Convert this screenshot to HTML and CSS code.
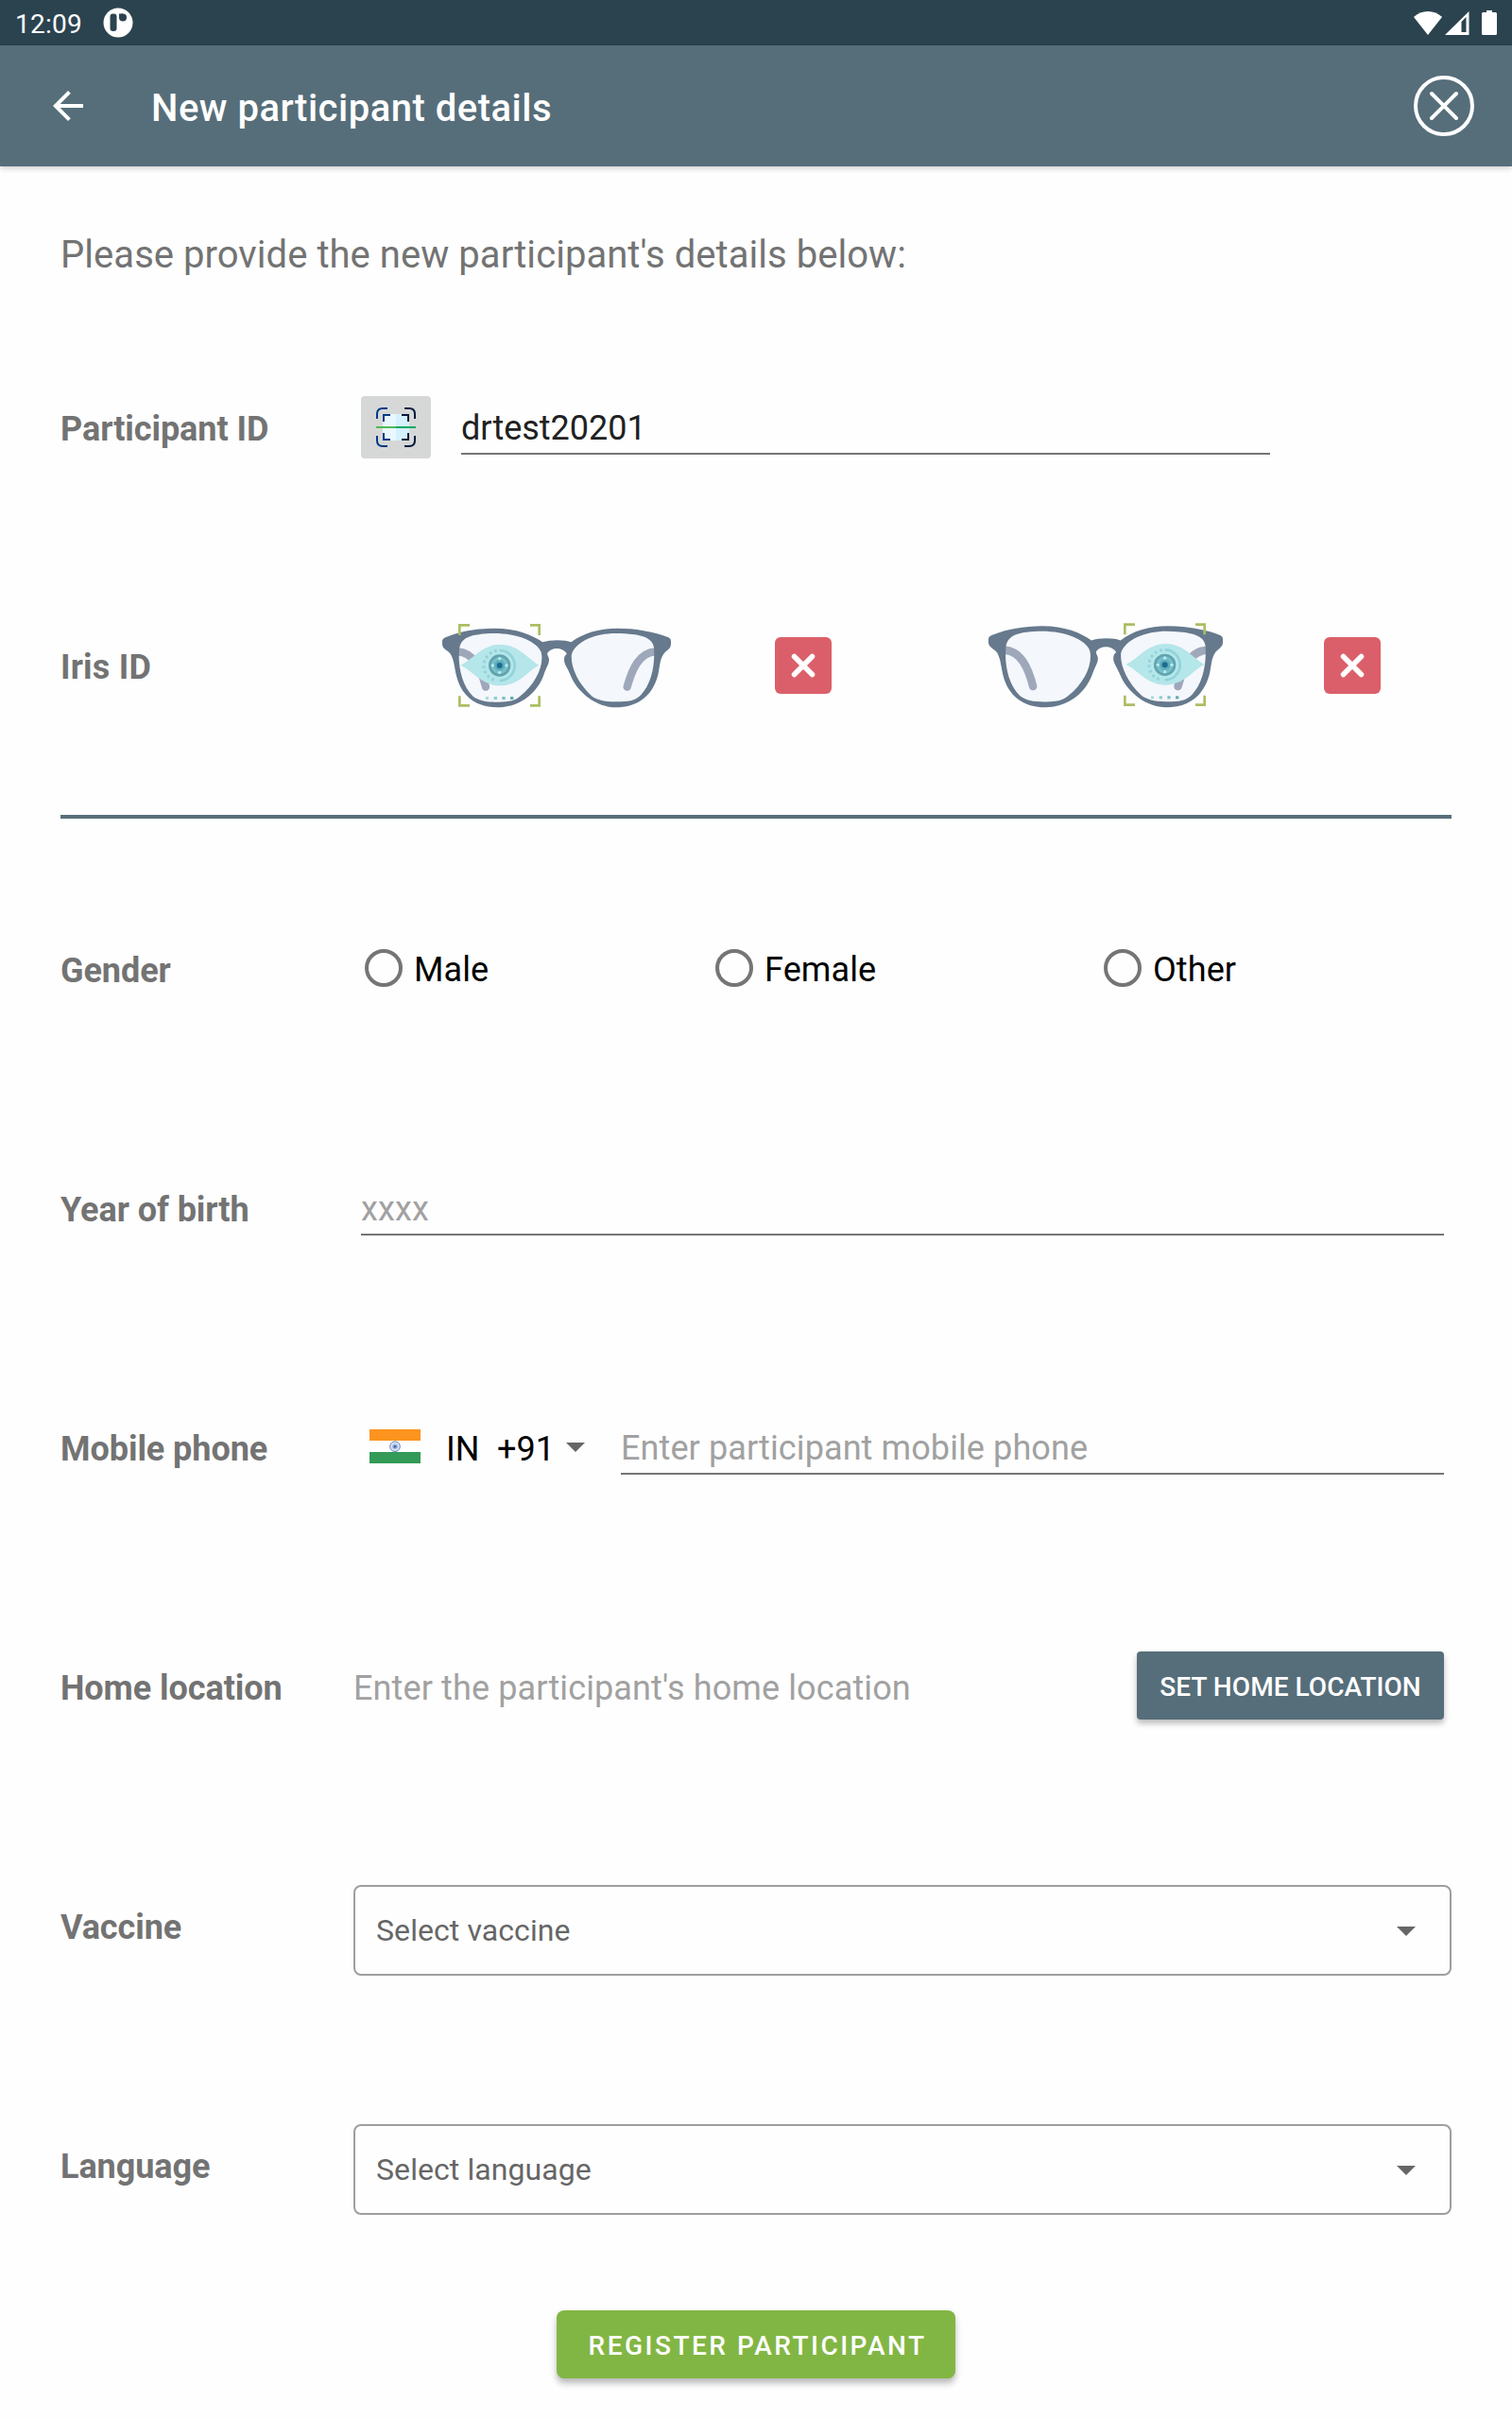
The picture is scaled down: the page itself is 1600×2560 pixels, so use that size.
FILE: index.html
```html
<!DOCTYPE html>
<html lang="en">
<head>
<meta charset="utf-8">
<title>New participant details</title>
<link rel="stylesheet" href="styles.css">
</head>
<body>
<svg class="defs" width="0" height="0" aria-hidden="true">
  <defs>
    <g id="frame">
      <path fill="#f4f7fb" d="M108 140C112 100 150 91 220 90C290 90 355 115 368 150C378 190 352 250 300 290C285 303 270 307 230 308C190 308 170 303 152 290C115 255 103 190 108 140ZM465 155C480 115 540 90 605 90C690 91 722 105 726 135C730 190 718 250 685 285C665 305 645 307 605 307C565 307 545 300 530 290C480 245 460 190 465 155Z"/>
      <path fill="none" stroke="#9fa8ba" stroke-width="25" stroke-linecap="round" d="M102 148C155 150 178 205 192 260M732 148C679 150 656 205 641 260"/>
      <path fill="#66798d" fill-rule="evenodd" d="M54 114C54 108 60 104 68 101C110 84 165 74 220 74C290 74 340 95 373 118C395 110 445 110 463 118C500 90 550 74 610 74C665 74 725 84 768 101C776 104 780 108 780 114V124C780 140 764 145 757 155C743 175 745 200 738 225C720 292 670 325 605 325C545 325 485 280 462 225C450 195 437 185 442 165C444 158 452 155 448 152C435 133 400 133 388 152C385 157 392 165 393 172C393 190 385 195 375 225C350 290 290 325 230 325C165 325 115 292 99 225C92 195 92 175 80 155C73 145 54 140 54 124ZM108 140C103 190 115 255 152 290C170 303 190 308 230 308C270 307 285 303 300 290C352 250 378 190 368 150C355 115 290 90 220 90C150 91 112 100 108 140ZM465 155C460 190 480 245 530 290C545 300 565 307 605 307C645 307 665 305 685 285C718 250 730 190 726 135C722 105 690 91 605 90C540 90 480 115 465 155Z"/>
    </g>
    <g id="eye">
      <path fill="#b4e6ea" d="M112 191C150 174 180 125 238 125C296 125 325 170 361 191C325 210 296 256 238 256C180 256 150 208 112 191Z"/>
      <path fill="none" stroke="#93d3db" stroke-width="8" d="M236 144A48 48 0 0 1 236 240"/>
      <path fill="none" stroke="#93d3db" stroke-width="9" stroke-dasharray="8 9" d="M227 145A48 48 0 0 0 227 240"/>
      <circle cx="236" cy="192" r="35" fill="#62a4ae"/>
      <circle cx="236" cy="192" r="27" fill="#78bfc9"/>
      <circle cx="236" cy="192" r="17" fill="#5fadbb"/>
      <circle cx="236" cy="192" r="9" fill="#1d6b8f"/>
      <g fill="#b9ebf0"><circle cx="236" cy="170" r="5"/><circle cx="236" cy="214" r="5"/><circle cx="214" cy="192" r="5"/><circle cx="258" cy="192" r="5"/></g>
      <path fill="#a8dcda" d="M192 291h9v9h-9z"/><path fill="#8cccd0" d="M218 291h10v9h-10z"/><path fill="#7abfc6" d="M244 291h10v9h-10z"/><path fill="#5ea9b4" d="M270 291h10v9h-10z"/>
      <path fill="none" stroke="#abbe63" stroke-width="8" d="M109 96V64H141M333 64H362V96M109 289V319H141M333 319H362V289"/>
    </g>
  </defs>
</svg>

<div class="status-bar">
  <span class="clock">12:09</span>
  <svg class="app-badge" width="32" height="32" viewBox="0 0 32 32"><circle cx="16" cy="16" r="15.5" fill="#fff"/><rect x="7.500" y="6.500" width="7" height="18.500" rx="3" fill="#2b434f"/><circle cx="21" cy="10.500" r="4" fill="#2b434f"/><path fill="#2b434f" d="M17 6.500h4v4h-4z"/></svg>
  <div class="status-icons">
    <svg width="30" height="25" viewBox="0 0 30 25"><path fill="#fff" d="M0 6C8-2 22-2 30 6L15 25Z"/></svg>
    <svg width="26" height="25" viewBox="0 0 26 25"><path fill="#fff" fill-rule="evenodd" d="M0 25L25.500 0V25ZM17.500 11V22H22.500V6Z"/></svg>
    <svg class="battery" width="16" height="26" viewBox="0 0 16 26"><path fill="#fff" d="M5 0h6v2h3.500q1.500 0 1.500 1.500v21q0 1.500-1.500 1.500h-13q-1.500 0-1.500-1.500v-21q0-1.500 1.500-1.500H5z"/></svg>
  </div>
</div>

<header class="app-bar">
  <svg width="48" height="48" viewBox="0 0 24 24"><path fill="#fff" d="M20 11H7.830l5.590-5.590L12 4l-8 8 8 8 1.410-1.410L7.830 13H20z"/></svg>
  <h1>New participant details</h1>
  <svg class="close" width="64" height="64" viewBox="0 0 64 64" fill="none" stroke="#fff" stroke-width="4" stroke-linecap="round"><circle cx="32" cy="32" r="30"/><path d="M19 19L45 45M45 19L19 45"/></svg>
</header>

<main>
  <p class="intro">Please provide the new participant's details below:</p>

  <div class="row">
    <div class="label">Participant ID</div>
    <button class="scan" aria-label="Scan">
      <svg width="42" height="42" viewBox="0 0 42 42"><path fill="#e9f8ff" d="M7 7h14v28H7z"/><path fill="#d5f1fd" d="M21 7h14v28H21z"/><g fill="none" stroke-width="2"><path stroke="#023a84" d="M1 12V7q0-6 6-6h5M1 30v5q0 6 6 6h5"/><path stroke="#021a3e" d="M30 1h5q6 0 6 6v5M30 41h5q6 0 6-6v-5"/><path stroke="#023a84" d="M8 15V8h7M8 27v7h7"/><path stroke="#021a3e" d="M27 8h7v7M27 34h7v-7"/></g><path fill="#51ba55" d="M0 20h21v2H0z"/><path fill="#08ab66" d="M21 20h21v2H21z"/></svg>
    </button>
    <div class="field id-field">drtest20201</div>
  </div>

  <div class="row iris">
    <div class="label">Iris ID</div>
    <svg class="glasses" width="280" height="130" viewBox="0 0 840 390"><use href="#frame"/><use href="#eye"/></svg>
    <svg class="remove" width="60" height="60" viewBox="0 0 60 60"><rect width="60" height="60" rx="6" fill="#db5f6a"/><path stroke="#fff" stroke-width="5.500" stroke-linecap="round" d="M20.500 20.500L39.500 39.500M39.500 20.500L20.500 39.500"/></svg>
    <svg class="glasses second" width="280" height="130" viewBox="0 0 840 390"><use href="#frame" transform="translate(-7.340 -9.070) scale(1.0248 1.028)"/><use href="#eye" transform="translate(372 -2)"/></svg>
    <svg class="remove last" width="60" height="60" viewBox="0 0 60 60"><rect width="60" height="60" rx="6" fill="#db5f6a"/><path stroke="#fff" stroke-width="5.500" stroke-linecap="round" d="M20.500 20.500L39.500 39.500M39.500 20.500L20.500 39.500"/></svg>
  </div>

  <hr>

  <div class="row">
    <div class="label">Gender</div>
    <div class="radios">
      <div class="radio"><i></i>Male</div>
      <div class="radio"><i></i>Female</div>
      <div class="radio"><i></i>Other</div>
    </div>
  </div>

  <div class="row">
    <div class="label">Year of birth</div>
    <div class="field hint">xxxx</div>
  </div>

  <div class="row">
    <div class="label">Mobile phone</div>
    <div class="country">
      <svg width="54" height="36" viewBox="0 0 54 36"><path fill="#fc941f" d="M0 0h54v12H0z"/><path fill="#fff" d="M0 12h54v12H0z"/><path fill="#339a57" d="M0 24h54v12H0z"/><circle cx="27" cy="18.200" r="5.300" fill="#dde5f3" stroke="#6482bd"/><circle cx="27" cy="18.200" r="3" fill="#a6b8dc"/><circle cx="27" cy="18.200" r="1.500" fill="#4569b0"/></svg>
      <span class="iso">IN</span><span>+91</span><i class="caret"></i>
    </div>
    <div class="field hint">Enter participant mobile phone</div>
  </div>

  <div class="row">
    <div class="label">Home location</div>
    <div class="location">Enter the participant's home location</div>
    <button class="set-home">SET HOME LOCATION</button>
  </div>

  <div class="row">
    <div class="label">Vaccine</div>
    <div class="select">Select vaccine<i class="caret"></i></div>
  </div>

  <div class="row">
    <div class="label">Language</div>
    <div class="select">Select language<i class="caret"></i></div>
  </div>

  <button class="register">REGISTER PARTICIPANT</button>
</main>
</body>
</html>
```

FILE: styles.css
```css
* { box-sizing: border-box; }
html, body { margin: 0; }
body {
  width: 1600px;
  height: 2560px;
  overflow: hidden;
  background: #fefefe;
  font-family: Roboto, sans-serif;
  font-size: 36px;
  color: #737373;
}
svg { display: block; flex: none; }
button { border: 0; margin: 0; padding: 0; font-family: inherit; color: #fff; flex: none; }
.defs { position: absolute; }

.status-bar {
  height: 48px;
  padding: 0 16px;
  display: flex;
  align-items: center;
  background: #2b434f;
  color: #fff;
}
.clock { width: 93px; font-size: 28px; line-height: 32px; padding-top: 3px; letter-spacing: .25px; }
.status-icons { margin-left: auto; display: flex; align-items: center; gap: 3px; }
.battery { margin-left: 10px; }

.app-bar {
  height: 128px;
  padding: 0 40px 0 48px;
  display: flex;
  align-items: center;
  background: #566e7a;
  color: #fff;
  box-shadow: 0 2px 6px rgba(0, 0, 0, .2);
}
.app-bar h1 { margin: 6px 0 0 64px; font-size: 40px; line-height: 48px; font-weight: 500; letter-spacing: .5px; }
.close { margin-left: auto; }

main { padding: 0 64px; display: flex; flex-direction: column; }
.intro { margin: 0; height: 151px; padding-top: 70px; font-size: 40px; line-height: 47px; letter-spacing: .05px; }

.row { height: 253px; display: flex; align-items: center; flex: none; }
.label { width: 310px; flex: none; font-weight: 700; line-height: 42px; white-space: nowrap; letter-spacing: -.06px; }

.scan {
  width: 74px;
  height: 66px;
  margin: 0 32px 3px 8px;
  display: flex;
  align-items: center;
  justify-content: center;
  border-radius: 4px;
  background: #d6d8d7;
}
.field {
  flex: 1;
  height: 54px;
  margin: 1px 8px 0;
  padding-top: 5px;
  border-bottom: 2px solid #757575;
  line-height: 42px;
  white-space: nowrap;
}
.id-field { flex: none; width: 856px; margin: 1px 0 0; color: #212121; }
.hint { color: #a1a1a1; letter-spacing: .1px; }

.iris .label { letter-spacing: .2px; padding-bottom: 1px; }
.glasses { margin: 0 0 3px 76px; }
.remove { margin: 0 0 5px 90px; }
.glasses.second { margin-left: 150px; }
.remove.last { margin-left: 91px; }

hr { width: 100%; height: 4px; margin: 29px 0 34px; border: 0; background: #566e7a; flex: none; }

.radios { display: grid; grid-template-columns: 371px 411px 1fr; padding-left: 12px; flex: 1; color: #000; }
.radio { display: flex; align-items: center; gap: 12px; line-height: 42px; padding-bottom: 1px; letter-spacing: .1px; }
.radio i { width: 40px; height: 40px; margin-bottom: 4px; border: 4px solid #757575; border-radius: 50%; }

.country { width: 275px; padding-left: 17px; display: flex; align-items: center; color: #000; line-height: 42px; }
.country svg { margin: 0 27px 5px 0; }
.iso { width: 54px; }
.caret { border: solid transparent; border-width: 10px 10px 0; border-top-color: #666; }
.country .caret { margin: 0 0 3px 12px; }

.location { flex: 1; color: #a1a1a1; line-height: 42px; letter-spacing: .12px; }
.set-home {
  width: 325px;
  height: 72px;
  margin: 0 8px 5px 0;
  border-radius: 4px;
  background: #566e7a;
  box-shadow: 0 4px 6px rgba(0, 0, 0, .28);
  font-size: 28px;
  font-weight: 500;
  padding-top: 2px;
  letter-spacing: .05px;
}

.select {
  flex: 1;
  height: 96px;
  margin-top: 7px;
  padding: 0 36px 0 22px;
  display: flex;
  align-items: center;
  justify-content: space-between;
  border: 2px solid #9e9e9e;
  border-radius: 8px;
  font-size: 32px;
  letter-spacing: .08px;
  color: #666;
}
.select .caret { margin-top: 2px; }

.register {
  align-self: center;
  width: 422px;
  height: 72px;
  margin-top: 26px;
  padding: 2px 0 0 3px;
  border-radius: 8px;
  background: #82b644;
  box-shadow: 0 5px 7px rgba(0, 0, 0, .28);
  font-size: 28px;
  font-weight: 500;
  letter-spacing: 2.5px;
}
```
